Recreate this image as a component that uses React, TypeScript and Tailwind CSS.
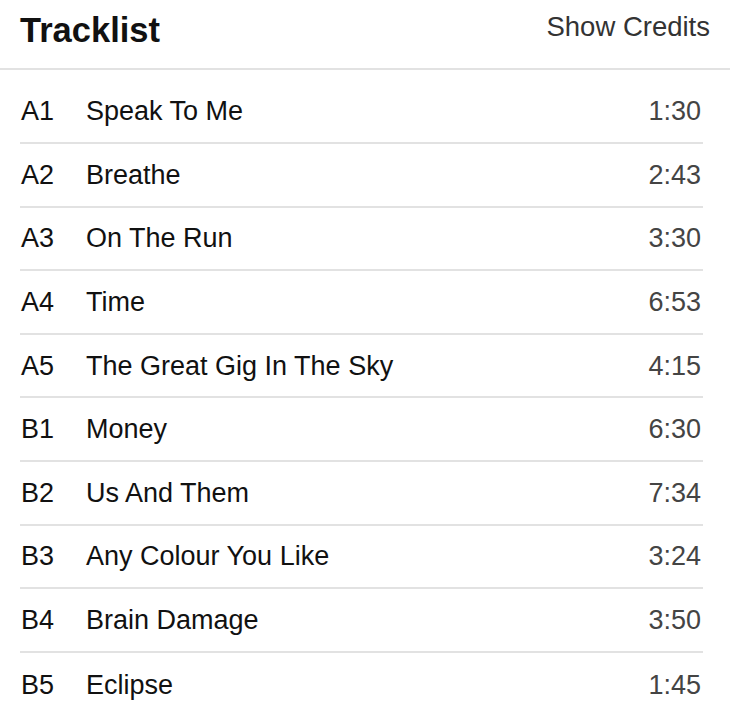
import React from "react";

const tracks = [
  ["A1", "Speak To Me", "1:30"],
  ["A2", "Breathe", "2:43"],
  ["A3", "On The Run", "3:30"],
  ["A4", "Time", "6:53"],
  ["A5", "The Great Gig In The Sky", "4:15"],
  ["B1", "Money", "6:30"],
  ["B2", "Us And Them", "7:34"],
  ["B3", "Any Colour You Like", "3:24"],
  ["B4", "Brain Damage", "3:50"],
  ["B5", "Eclipse", "1:45"],
];

export default function App() {
  return (
    <div
      className="w-[730px] h-[720px] overflow-hidden bg-white"
      style={{ fontFamily: '"Liberation Sans", Arial, sans-serif' }}
    >
      <div className="h-[70px] border-b-2 border-[#e2e2e2] flex items-start justify-between pl-5 pr-5">
        <h1 className="text-[34.5px] font-bold text-[#111] leading-none mt-[13px]">Tracklist</h1>
        <button className="text-[27.5px] text-[#333] leading-none mt-[13px]">Show Credits</button>
      </div>
      <div className="pt-[10.5px] pl-5 pr-[27px]">
        {tracks.map(([code, title, time], i) => (
          <div
            key={code}
            className={`h-[63.6px] flex items-center text-[27px] leading-none ${
              i < tracks.length - 1 ? "border-b-2 border-[#e2e2e2]" : ""
            }`}
          >
            <span className="w-[66px] pl-[1px] pt-[1px] text-[#111]">{code}</span>
            <span className="flex-1 pt-[1px] text-[#111]">{title}</span>
            <span className="text-[#444] pt-[1px] pr-[2px]">{time}</span>
          </div>
        ))}
      </div>
    </div>
  );
}
